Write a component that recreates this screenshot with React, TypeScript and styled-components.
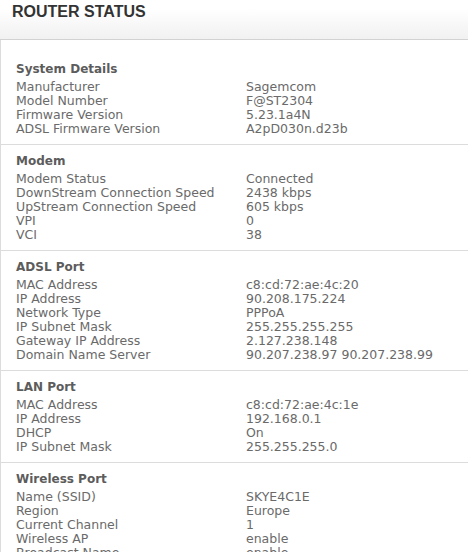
import React from "react";
import styled, { createGlobalStyle } from "styled-components";

const Global = createGlobalStyle`
  html, body { margin: 0; padding: 0; background: #fff; }
  body { font-family: "DejaVu Sans", Verdana, sans-serif; }
`;

const Page = styled.div`
  width: 468px;
`;

const Header = styled.header`
  height: 40px;
  padding: 4px 0 0 12px;
  box-sizing: border-box;
  background: linear-gradient(#ffffff 0%, #ffffff 22%, #f1f1f1 100%);
  border-bottom: 1px solid #d2d2d2;
`;

const Title = styled.h1`
  margin: 0;
  font-family: "Liberation Sans", Arial, sans-serif;
  font-weight: bold;
  font-size: 16px;
  line-height: 16px;
  color: #333;
`;

const Body = styled.div`
  border-left: 1px solid #dcdcdc;
  padding-top: 13px;
`;

const Section = styled.section<{ $first?: boolean }>`
  border-top: ${(p) => (p.$first ? "none" : "1px solid #dcdcdc")};
  padding: 8px 0 8px 15px;
`;

const Heading = styled.h2`
  margin: 0 0 3px 0;
  font-size: 12px;
  line-height: 16px;
  font-weight: bold;
  color: #5c5c5c;
`;

const Row = styled.div`
  display: grid;
  grid-template-columns: 230px 1fr;
  font-size: 12.5px;
  line-height: 14px;
  color: #6a6a6a;
  white-space: nowrap;
`;

type Item = [string, string];

const sections: { title: string; items: Item[] }[] = [
  {
    title: "System Details",
    items: [
      ["Manufacturer", "Sagemcom"],
      ["Model Number", "F@ST2304"],
      ["Firmware Version", "5.23.1a4N"],
      ["ADSL Firmware Version", "A2pD030n.d23b"],
    ],
  },
  {
    title: "Modem",
    items: [
      ["Modem Status", "Connected"],
      ["DownStream Connection Speed", "2438 kbps"],
      ["UpStream Connection Speed", "605 kbps"],
      ["VPI", "0"],
      ["VCI", "38"],
    ],
  },
  {
    title: "ADSL Port",
    items: [
      ["MAC Address", "c8:cd:72:ae:4c:20"],
      ["IP Address", "90.208.175.224"],
      ["Network Type", "PPPoA"],
      ["IP Subnet Mask", "255.255.255.255"],
      ["Gateway IP Address", "2.127.238.148"],
      ["Domain Name Server", "90.207.238.97 90.207.238.99"],
    ],
  },
  {
    title: "LAN Port",
    items: [
      ["MAC Address", "c8:cd:72:ae:4c:1e"],
      ["IP Address", "192.168.0.1"],
      ["DHCP", "On"],
      ["IP Subnet Mask", "255.255.255.0"],
    ],
  },
  {
    title: "Wireless Port",
    items: [
      ["Name (SSID)", "SKYE4C1E"],
      ["Region", "Europe"],
      ["Current Channel", "1"],
      ["Wireless AP", "enable"],
      ["Broadcast Name", "enable"],
    ],
  },
];

export default function App() {
  return (
    <Page>
      <Global />
      <Header>
        <Title>ROUTER STATUS</Title>
      </Header>
      <Body>
        {sections.map((s, i) => (
          <Section key={s.title} $first={i === 0}>
            <Heading>{s.title}</Heading>
            {s.items.map(([k, v]) => (
              <Row key={k}>
                <span>{k}</span>
                <span>{v}</span>
              </Row>
            ))}
          </Section>
        ))}
      </Body>
    </Page>
  );
}
